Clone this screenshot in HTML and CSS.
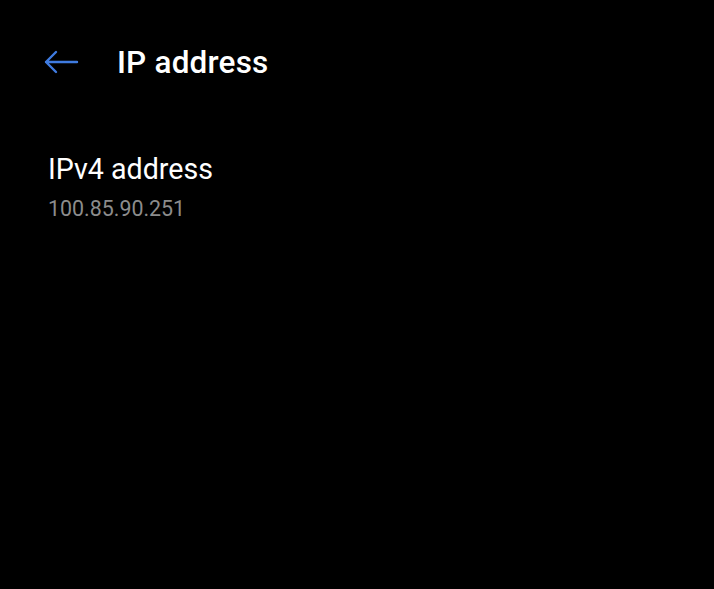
FILE: index.html
```html
<!DOCTYPE HTML>
<html>

<head>
    <meta charset="utf-8">
    <title>IP address</title>
    <link rel="stylesheet" href="styles.css">
</head>

<body>
<div class="header">
    <a href="javascript:;" class="back">
        <svg width="36" height="24" viewBox="0 0 36 24">
            <path d="M34 12H3M13 2L3 12l10 10" fill="none" stroke="#3f7be0" stroke-width="2.4" stroke-linecap="round" stroke-linejoin="round"/>
        </svg>
    </a>
    <h1 class="title">IP address</h1>
</div>
<ul class="list">
    <li class="item">
        <div class="item-name">IPv4 address</div>
        <div class="item-value">100.85.90.251</div>
    </li>
</ul>
</body>

</html>
```
FILE: styles.css
```css
* {
    margin: 0;
    padding: 0;
}

html, body {
    height: 100%;
    background: #000;
}

body {
    font-family: Roboto, "Noto Sans", sans-serif;
    color: #fff;
}

li {
    list-style: none;
}

.header {
    display: flex;
    align-items: center;
    height: 64px;
    padding: 30px 0 0 43px;
}

.back {
    display: flex;
    width: 36px;
    height: 24px;
    margin-right: 38px;
}

.title {
    font-size: 31.5px;
    font-weight: 500;
    letter-spacing: 0.2px;
}

.list {
    padding: 56px 48px 0;
}

.item-name {
    font-size: 28.6px;
    line-height: 38px;
}

.item-value {
    font-size: 21.4px;
    line-height: 28px;
    margin-top: 7px;
    color: #8c8c8c;
}
```
